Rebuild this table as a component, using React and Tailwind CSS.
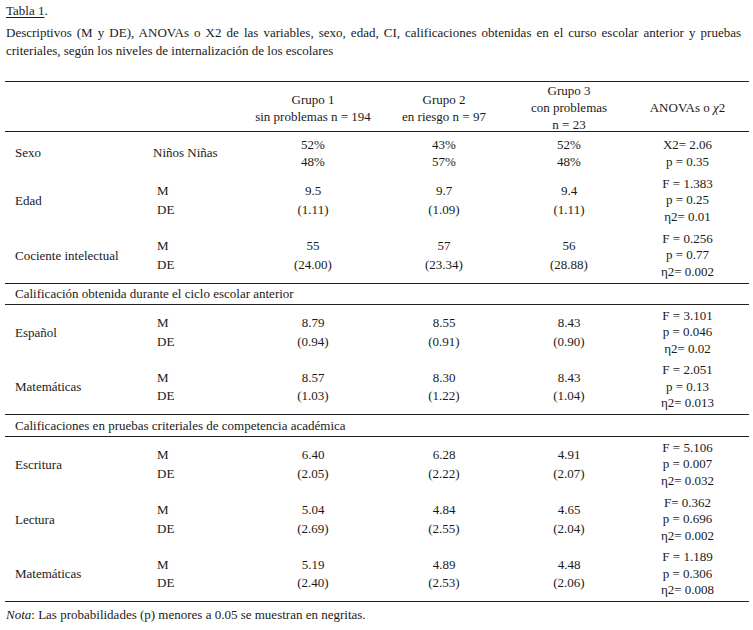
const cols = "grid grid-cols-[145px_100px_126px_136px_114px_123px]";

const rows = [
  {
    label: "Edad",
    g: [["9.5", "(1.11)"], ["9.7", "(1.09)"], ["9.4", "(1.11)"]],
    a: ["F = 1.383", "p = 0.25", "η2= 0.01"],
  },
  {
    label: "Cociente intelectual",
    g: [["55", "(24.00)"], ["57", "(23.34)"], ["56", "(28.88)"]],
    a: ["F = 0.256", "p = 0.77", "η2= 0.002"],
    h: "h-[56px]",
    border: true,
  },
];

const section2 = [
  {
    label: "Español",
    g: [["8.79", "(0.94)"], ["8.55", "(0.91)"], ["8.43", "(0.90)"]],
    a: ["F = 3.101", "p = 0.046", "η2= 0.02"],
  },
  {
    label: "Matemáticas",
    g: [["8.57", "(1.03)"], ["8.30", "(1.22)"], ["8.43", "(1.04)"]],
    a: ["F = 2.051", "p = 0.13", "η2= 0.013"],
    border: true,
  },
];

const section3 = [
  {
    label: "Escritura",
    g: [["6.40", "(2.05)"], ["6.28", "(2.22)"], ["4.91", "(2.07)"]],
    a: ["F = 5.106", "p = 0.007", "η2= 0.032"],
  },
  {
    label: "Lectura",
    g: [["5.04", "(2.69)"], ["4.84", "(2.55)"], ["4.65", "(2.04)"]],
    a: ["F= 0.362", "p = 0.696", "η2= 0.002"],
  },
  {
    label: "Matemáticas",
    g: [["5.19", "(2.40)"], ["4.89", "(2.53)"], ["4.48", "(2.06)"]],
    a: ["F = 1.189", "p = 0.306", "η2= 0.008"],
    border: true,
  },
];

function DataRow({ row }) {
  return (
    <div
      className={`${cols} ${row.h ?? "h-[55px]"} ${
        row.border ? "border-b border-[#1f1f1f]" : ""
      }`}
    >
      <div className="flex items-center pl-[10px]">{row.label}</div>
      <div className="flex flex-col justify-center pl-[7px] leading-[18.5px]">
        <span>M</span>
        <span>DE</span>
      </div>
      {row.g.map((v, i) => (
        <div key={i} className="flex flex-col items-center justify-center leading-[18.5px]">
          <span>{v[0]}</span>
          <span>{v[1]}</span>
        </div>
      ))}
      <div className="flex flex-col items-center justify-center leading-[16.5px]">
        {row.a.map((t) => (
          <span key={t}>{t}</span>
        ))}
      </div>
    </div>
  );
}

function SectionRow({ children, h }) {
  return (
    <div className={`${h} flex items-center pl-[10px] border-b border-[#1f1f1f]`}>
      {children}
    </div>
  );
}

export default function App() {
  return (
    <div className="w-[753px] h-[630px] bg-white text-[#1a1a1a] text-[13px] font-[family-name:Liberation_Serif,serif] overflow-hidden">
      {/* caption */}
      <div className="pl-[6px] pt-[2px] leading-[18px]">
        <p>
          <span className="underline underline-offset-2">Tabla 1</span>.
        </p>
        <p className="mt-[4px] w-[735px] text-justify">
          Descriptivos (M y DE), ANOVAs o X2 de las variables, sexo, edad, CI, calificaciones obtenidas en el curso escolar anterior y pruebas criteriales, según los niveles de internalización de los escolares
        </p>
      </div>

      {/* table */}
      <div className="ml-[5px] mt-[21px] w-[744px] border-t border-[#1f1f1f]">
        <div className={`${cols} h-[50px] border-b border-[#1f1f1f] leading-[17px]`}>
          <div />
          <div />
          <div className="flex flex-col items-center justify-center">
            <span>Grupo 1</span>
            <span>sin problemas n = 194</span>
          </div>
          <div className="flex flex-col items-center justify-center">
            <span>Grupo 2</span>
            <span>en riesgo n = 97</span>
          </div>
          <div className="flex flex-col items-center justify-center">
            <span>Grupo 3</span>
            <span>con problemas</span>
            <span>n = 23</span>
          </div>
          <div className="flex items-center justify-center">
            <span>
              ANOVAs o <i>χ</i>2
            </span>
          </div>
        </div>

        <div className={`${cols} h-[41px]`}>
          <div className="flex items-center pl-[10px]">Sexo</div>
          <div className="flex items-center pl-[3px]">Niños Niñas</div>
          {[["52%", "48%"], ["43%", "57%"], ["52%", "48%"]].map((v, i) => (
            <div key={i} className="flex flex-col items-center justify-center leading-[17px]">
              <span>{v[0]}</span>
              <span>{v[1]}</span>
            </div>
          ))}
          <div className="flex flex-col items-center justify-center leading-[17px]">
            <span>X2= 2.06</span>
            <span>p = 0.35</span>
          </div>
        </div>

        {rows.map((r) => (
          <DataRow key={r.label} row={r} />
        ))}

        <SectionRow h="h-[21px]">Calificación obtenida durante el ciclo escolar anterior</SectionRow>

        {section2.map((r) => (
          <DataRow key={r.label} row={r} />
        ))}

        <SectionRow h="h-[22px]">Calificaciones en pruebas criteriales de competencia académica</SectionRow>

        {section3.map((r) => (
          <DataRow key={r.label} row={r} />
        ))}
      </div>

      <p className="pl-[6px] mt-[4px] leading-[18px]">
        <i>Nota</i>: Las probabilidades (p) menores a 0.05 se muestran en negritas.
      </p>
    </div>
  );
}
